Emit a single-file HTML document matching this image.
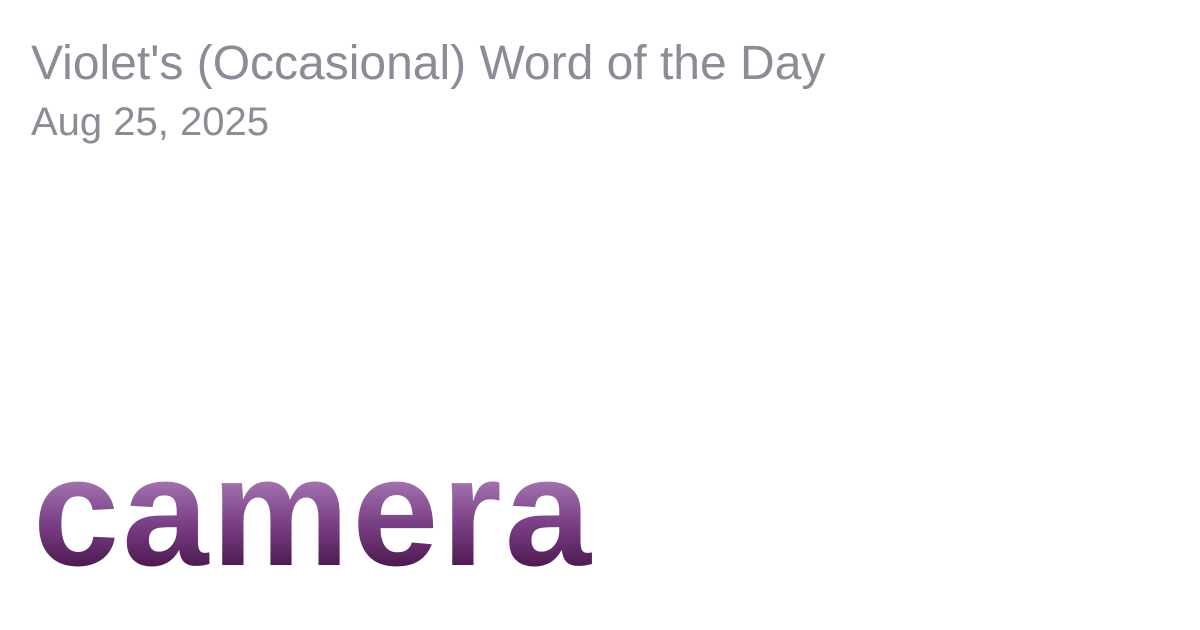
<!DOCTYPE html>
<html><head><style>
html,body{margin:0;padding:0;background:#fff;}
body{width:1200px;height:630px;position:relative;overflow:hidden;font-family:"Liberation Sans",sans-serif;}
.t{position:absolute;left:31px;top:36px;font-size:48px;line-height:56px;color:#8b8d96;white-space:nowrap;}
.d{position:absolute;left:31px;top:99px;font-size:40px;line-height:46px;color:#8b8d96;white-space:nowrap;}
.w{position:absolute;left:33px;top:434px;font-size:155px;line-height:155px;font-weight:bold;letter-spacing:3px;white-space:nowrap;
background:linear-gradient(180deg,#a373b0 0px,#a373b0 46px,#7a3f85 90px,#4a174d 136px,#4a174d 155px);
-webkit-background-clip:text;background-clip:text;color:transparent;}
</style></head><body>
<div class="t">Violet's (Occasional) Word of the Day</div>
<div class="d">Aug 25, 2025</div>
<div class="w">camera</div>
</body></html>
